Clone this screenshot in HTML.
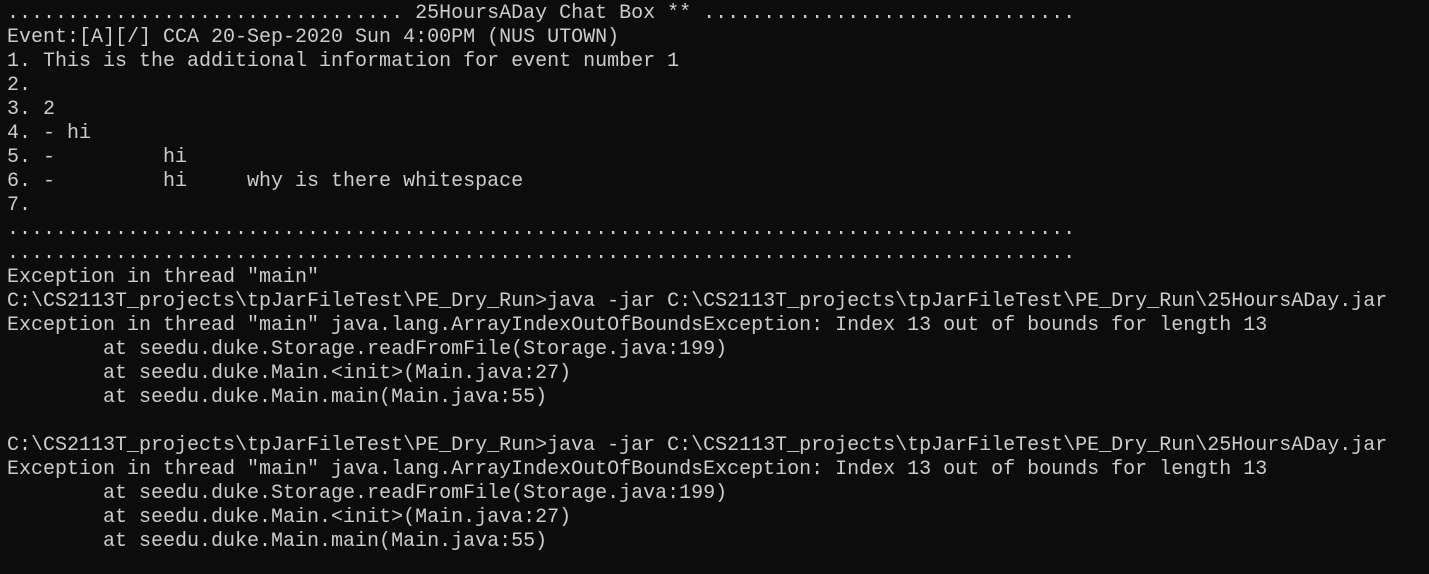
<!DOCTYPE html>
<html><head><meta charset="utf-8"><style>
html,body{margin:0;padding:0;background:#0c0c0c;width:1429px;height:574px;overflow:hidden}
pre{margin:0;position:absolute;left:7px;top:2px;font-family:"Liberation Mono",monospace;font-size:20px;line-height:24px;color:#cccccc;white-space:pre}
</style></head><body><pre>................................. 25HoursADay Chat Box ** ...............................
Event:[A][/] CCA 20-Sep-2020 Sun 4:00PM (NUS UTOWN)
1. This is the additional information for event number 1
2.
3. 2
4. - hi
5. -         hi
6. -         hi     why is there whitespace
7.
.........................................................................................
.........................................................................................
Exception in thread "main"
C:\CS2113T_projects\tpJarFileTest\PE_Dry_Run>java -jar C:\CS2113T_projects\tpJarFileTest\PE_Dry_Run\25HoursADay.jar
Exception in thread "main" java.lang.ArrayIndexOutOfBoundsException: Index 13 out of bounds for length 13
        at seedu.duke.Storage.readFromFile(Storage.java:199)
        at seedu.duke.Main.&lt;init&gt;(Main.java:27)
        at seedu.duke.Main.main(Main.java:55)

C:\CS2113T_projects\tpJarFileTest\PE_Dry_Run>java -jar C:\CS2113T_projects\tpJarFileTest\PE_Dry_Run\25HoursADay.jar
Exception in thread "main" java.lang.ArrayIndexOutOfBoundsException: Index 13 out of bounds for length 13
        at seedu.duke.Storage.readFromFile(Storage.java:199)
        at seedu.duke.Main.&lt;init&gt;(Main.java:27)
        at seedu.duke.Main.main(Main.java:55)
</pre></body></html>
